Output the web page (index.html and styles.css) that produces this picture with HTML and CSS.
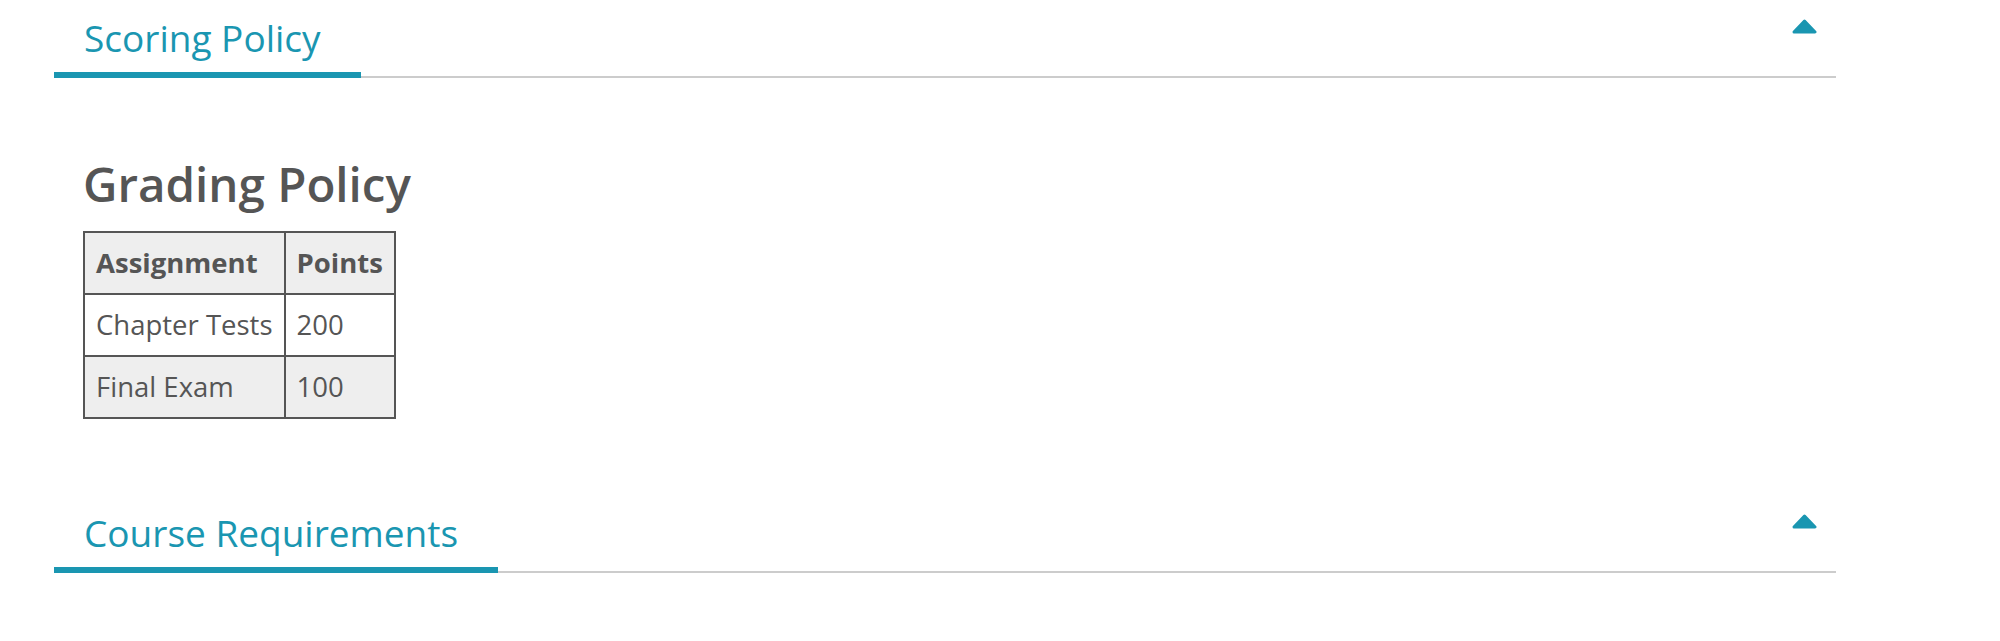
FILE: index.html
```html
<!DOCTYPE html>
<html lang="en">
<head>
    <meta charset="UTF-8">
    <meta name="viewport" content="width=device-width, initial-scale=1.0">
    <title>Course Syllabus</title>
    <link rel="stylesheet" href="styles.css">
</head>
<body>
    <div class="container">
        <div class="section">
            <div class="section-header">
                <h2 class="section-title">Scoring Policy</h2>
                <button class="toggle-button" aria-label="Collapse">
                    <svg width="25" height="15" viewBox="0 0 25 15"><path d="M12.5 2 L23 13 L2 13 Z" fill="#1a96b1" stroke="#1a96b1" stroke-width="3" stroke-linejoin="round"/></svg>
                </button>
            </div>
            <div class="section-body">
                <h1>Grading Policy</h1>
                <table class="grading-table">
                    <tr>
                        <th>Assignment</th>
                        <th>Points</th>
                    </tr>
                    <tr>
                        <td>Chapter Tests</td>
                        <td>200</td>
                    </tr>
                    <tr>
                        <td>Final Exam</td>
                        <td>100</td>
                    </tr>
                </table>
            </div>
        </div>
        <div class="section">
            <div class="section-header">
                <h2 class="section-title">Course Requirements</h2>
                <button class="toggle-button" aria-label="Collapse">
                    <svg width="25" height="15" viewBox="0 0 25 15"><path d="M12.5 2 L23 13 L2 13 Z" fill="#1a96b1" stroke="#1a96b1" stroke-width="3" stroke-linejoin="round"/></svg>
                </button>
            </div>
        </div>
    </div>
</body>
</html>
```

FILE: styles.css
```css
body {
    font-family: "Open Sans", Arial, sans-serif;
    background-color: #fff;
    color: #555;
    margin: 0;
    padding: 0;
}

.container {
    margin-left: 54px;
    width: 1782px;
}

.section-header {
    display: flex;
    justify-content: space-between;
    align-items: flex-start;
    padding-top: 13px;
    border-bottom: 2px solid #ccc;
}

.section-title {
    margin: 0 0 -2px 0;
    padding: 0 40px 10px 30px;
    font-size: 37px;
    font-weight: 400;
    line-height: 49px;
    color: #1a96b1;
    border-bottom: 6px solid #1a96b1;
}

.toggle-button {
    background: none;
    border: none;
    padding: 0;
    margin: 6px 19px 0 0;
    cursor: pointer;
    line-height: 0;
}

.section-body {
    padding: 77px 0 76px 29px;
}

.section-body h1 {
    margin: 0 0 19px 0;
    font-size: 47.5px;
    font-weight: 600;
    line-height: 57px;
    color: #555;
}

.grading-table {
    border-collapse: collapse;
    border: 2px solid #555;
    font-size: 27.5px;
    line-height: 40px;
}

.grading-table th,
.grading-table td {
    border: 2px solid #555;
    padding: 10px 11px;
    text-align: left;
}

.grading-table th {
    font-weight: 700;
    background-color: #eee;
}

.grading-table tr:nth-child(3) td {
    background-color: #eee;
}
```
